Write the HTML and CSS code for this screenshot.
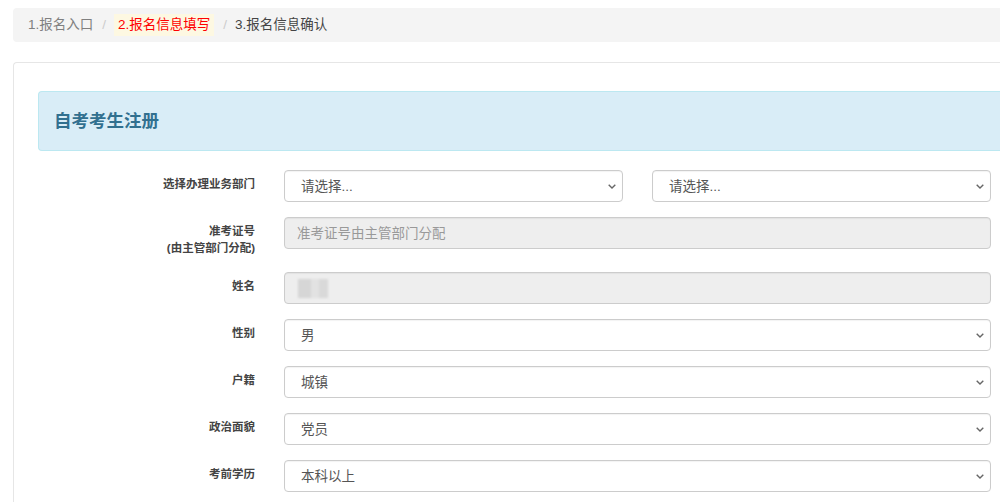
FILE: index.html
```html
<!DOCTYPE html>
<html lang="zh-CN">
<head>
<meta charset="utf-8">
<title>自考考生注册</title>
<link rel="stylesheet" href="styles.css">
</head>
<body>
<div class="page">
  <nav class="crumbs">
    <span class="crumb done">1.报名入口</span><span class="sep">/</span><span class="crumb active">2.报名信息填写</span><span class="sep">/</span><span class="crumb">3.报名信息确认</span>
  </nav>
  <section class="panel">
    <div class="alert"><h4 class="alert-title">自考考生注册</h4></div>
    <form class="form">
      <div class="row">
        <label class="lbl">选择办理业务部门</label>
        <div class="ctl split">
          <div class="sel"><select class="field"><option>请选择...</option></select><svg class="chev" viewBox="0 0 8 5" width="8" height="5"><path d="M0.7 0.7 L4 4 L7.3 0.7"/></svg></div>
          <div class="sel"><select class="field"><option>请选择...</option></select><svg class="chev" viewBox="0 0 8 5" width="8" height="5"><path d="M0.7 0.7 L4 4 L7.3 0.7"/></svg></div>
        </div>
      </div>
      <div class="row">
        <label class="lbl">准考证号<br>(由主管部门分配)</label>
        <div class="ctl"><input class="field ro" type="text" readonly placeholder="准考证号由主管部门分配"></div>
      </div>
      <div class="row">
        <label class="lbl">姓名</label>
        <div class="ctl"><div class="field ro fake"><span class="blur"></span></div></div>
      </div>
      <div class="row">
        <label class="lbl">性别</label>
        <div class="ctl sel"><select class="field"><option>男</option><option>女</option></select><svg class="chev" viewBox="0 0 8 5" width="8" height="5"><path d="M0.7 0.7 L4 4 L7.3 0.7"/></svg></div>
      </div>
      <div class="row">
        <label class="lbl">户籍</label>
        <div class="ctl sel"><select class="field"><option>城镇</option><option>农村</option></select><svg class="chev" viewBox="0 0 8 5" width="8" height="5"><path d="M0.7 0.7 L4 4 L7.3 0.7"/></svg></div>
      </div>
      <div class="row">
        <label class="lbl">政治面貌</label>
        <div class="ctl sel"><select class="field"><option>党员</option><option>团员</option><option>群众</option></select><svg class="chev" viewBox="0 0 8 5" width="8" height="5"><path d="M0.7 0.7 L4 4 L7.3 0.7"/></svg></div>
      </div>
      <div class="row">
        <label class="lbl">考前学历</label>
        <div class="ctl sel"><select class="field"><option>本科以上</option><option>大专</option></select><svg class="chev" viewBox="0 0 8 5" width="8" height="5"><path d="M0.7 0.7 L4 4 L7.3 0.7"/></svg></div>
      </div>
    </form>
  </section>
</div>
</body>
</html>
```
FILE: styles.css
```css
html, body {
  margin: 0;
  padding: 0;
  overflow: hidden;
  background: #fff;
}
body {
  font-family: "Liberation Sans", "Noto Sans CJK SC", sans-serif;
  font-size: 14px;
  color: #333;
}
.page {
  width: 1031px;
  padding: 8px 0 0 13px;
}
.crumbs {
  display: flex;
  align-items: center;
  background: #f4f4f4;
  border-radius: 4px;
  padding: 8px 15px;
  line-height: 18px;
  height: 18px;
  margin-bottom: 20px;
  font-size: 13.5px;
}
.crumb { color: #444; white-space: nowrap; }
.crumb.done { color: #808080; }
.crumb.active {
  color: #ff0000;
  background: #fdf8e2;
  padding: 2px 4px;
}
.sep {
  color: #ccc;
  padding: 0 8px 0 9px;
}
.panel {
  border: 1px solid #e6e6e6;
  border-right: none;
  border-radius: 4px 0 0 0;
  padding: 28px 0 0 24px;
  height: 500px;
}
.alert {
  background: #d9edf7;
  border: 1px solid #bce8f1;
  border-right: none;
  border-radius: 4px 0 0 4px;
  padding: 15px;
  margin-bottom: 19px;
}
.alert-title {
  margin: 0;
  font-size: 17.5px;
  line-height: 28px;
  font-weight: 700;
  color: #31708f;
}
.form { display: flex; flex-direction: column; gap: 15px; }
.row { display: flex; align-items: flex-start; }
.lbl {
  width: 217px;
  padding: 6px 14px 0 0;
  text-align: right;
  font-size: 11.5px;
  line-height: 17px;
  font-weight: 700;
  color: #444;
}
.ctl {
  width: 707px;
  padding-left: 15px;
}
.split { display: flex; gap: 29px; }
.sel { position: relative; }
.split .sel { width: 339px; }
.chev {
  position: absolute;
  right: 7px;
  top: 14px;
  fill: none;
  stroke: #666;
  stroke-width: 1.4;
  pointer-events: none;
}
.field {
  box-sizing: border-box;
  display: block;
  width: 100%;
  height: 32px;
  border: 1px solid #ccc;
  border-radius: 4px;
  background: #fff;
  padding: 0 12px;
  font-family: inherit;
  font-size: 13.5px;
  color: #555;
  box-shadow: inset 0 1px 1px rgba(0,0,0,.05);
}
select.field {
  -webkit-appearance: none;
  appearance: none;
  padding-left: 16px;
}
.field.ro { background: #eee; }
.field::placeholder { color: #999; }
.fake { display: flex; align-items: center; }
.blur {
  display: block;
  width: 30px;
  height: 19px;
  margin-left: 1px;
  background: linear-gradient(90deg, #d6d6d6 0 45%, #e2e2e2 45% 70%, #d9d9d9 70%);
  filter: blur(1px);
}
```
